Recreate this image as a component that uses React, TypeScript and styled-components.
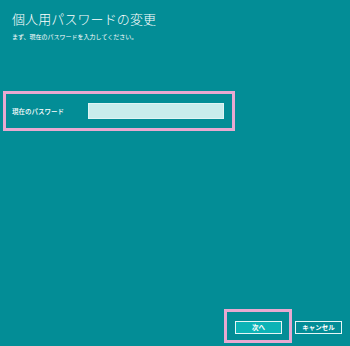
import React from "react";
import styled, { createGlobalStyle } from "styled-components";

const GlobalStyle = createGlobalStyle`
  html, body {
    margin: 0;
    padding: 0;
    background: #038d96;
  }
  * {
    box-sizing: border-box;
  }
`;

const Page = styled.div`
  width: 350px;
  height: 346px;
  display: flex;
  flex-direction: column;
  background: #038d96;
  color: #ffffff;
  font-family: "Noto Sans CJK JP", "Noto Sans", sans-serif;
  overflow: hidden;
`;

const Header = styled.div`
  padding: 10px 0 0 12px;
`;

const Title = styled.h1`
  margin: 0;
  font-size: 13px;
  line-height: 18px;
  font-weight: 300;
  letter-spacing: 0.1px;
`;

const Subtitle = styled.p`
  margin: 4px 0 0;
  font-size: 6px;
  line-height: 10px;
  font-weight: 400;
`;

const Highlight = styled.div<{ $pad: string }>`
  border: 3px solid #e8a9d1;
  padding: ${(p) => p.$pad};
`;

const FieldBox = styled(Highlight)`
  margin: 49px 0 0 3px;
  width: 232px;
  height: 40px;
  display: flex;
  align-items: center;
`;

const Label = styled.label`
  width: 76px;
  font-size: 6.5px;
  line-height: 10px;
  font-weight: 500;
`;

const Input = styled.div`
  width: 136px;
  height: 16px;
  background: #c9ecec;
  border: 1px solid #dff5f5;
`;

const Footer = styled.div`
  margin-top: auto;
  display: flex;
  justify-content: flex-end;
  align-items: flex-end;
  gap: 3px;
  padding: 0 8px 3px 0;
`;

const Button = styled.button<{ $primary?: boolean }>`
  width: 47px;
  height: 13px;
  padding: 0;
  border: 1px solid #e6f6f6;
  background: ${(p) => (p.$primary ? "#0cb3b6" : "#038d96")};
  color: #ffffff;
  font-family: "Noto Sans CJK JP", sans-serif;
  font-size: 6.5px;
  line-height: 11px;
  font-weight: 700;
  display: flex;
  align-items: center;
  justify-content: center;
`;

const CancelButton = styled(Button)`
  margin-bottom: 9px;
`;

export default function App() {
  return (
    <>
      <GlobalStyle />
      <Page>
        <Header>
          <Title>個人用パスワードの変更</Title>
          <Subtitle>まず、現在のパスワードを入力してください。</Subtitle>
        </Header>
        <FieldBox $pad="0 0 0 6px">
          <Label>現在のパスワード</Label>
          <Input />
        </FieldBox>
        <Footer>
          <Highlight $pad="9px 7px 6px 8px">
            <Button $primary>次へ</Button>
          </Highlight>
          <CancelButton>キャンセル</CancelButton>
        </Footer>
      </Page>
    </>
  );
}
